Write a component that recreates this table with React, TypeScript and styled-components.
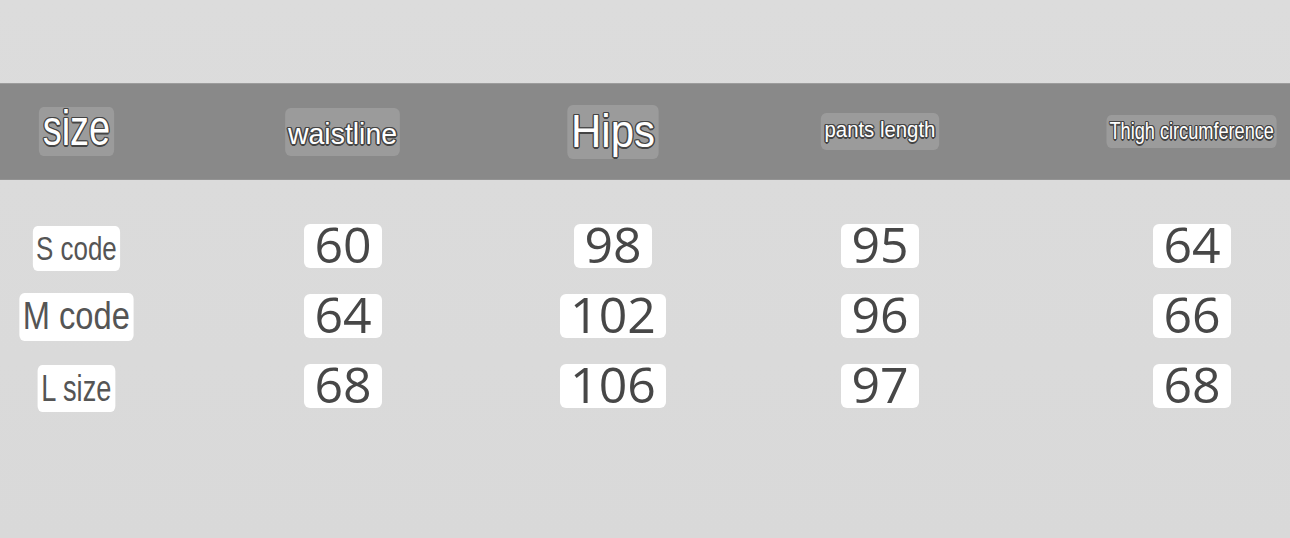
import styled, { createGlobalStyle } from "styled-components";

const GlobalStyle = createGlobalStyle`
  html, body {
    margin: 0;
    padding: 0;
    background: #dbdbdb;
    font-family: "Liberation Sans", Arial, sans-serif;
  }
`;

// column centres sit at 76 / 343 / 613 / 880 / 1192
const COLUMNS = "152px 382px 158px 376px 248px";

type TagProps = {
  $fs: number; // font size
  $sx: number; // horizontal squeeze of the source picture
  $h: number; // box height
  $b: number; // baseline from box top
  $px: number; // side padding
  $dy?: number; // small vertical nudge
};

const headers: (TagProps & { text: string })[] = [
  { text: "size", $fs: 50, $sx: 0.76, $h: 49, $b: 39, $px: 5 },
  { text: "waistline", $fs: 30, $sx: 0.948, $h: 48, $b: 36, $px: 3 },
  { text: "Hips", $fs: 46, $sx: 0.913, $h: 54, $b: 42, $px: 4 },
  { text: "pants length", $fs: 22, $sx: 0.925, $h: 37, $b: 25, $px: 4 },
  { text: "Thigh circumference", $fs: 24, $sx: 0.756, $h: 33, $b: 24, $px: 4 },
];

const rows = [
  {
    label: { text: "S code", $fs: 33, $sx: 0.786, $h: 45, $b: 34, $px: 4, $dy: 2 },
    values: ["60", "98", "95", "64"],
  },
  {
    label: { text: "M code", $fs: 38, $sx: 0.859, $h: 48, $b: 37, $px: 4, $dy: 1 },
    values: ["64", "102", "96", "66"],
  },
  {
    label: { text: "L size", $fs: 36, $sx: 0.755, $h: 47, $b: 36, $px: 5, $dy: 2 },
    values: ["68", "106", "97", "68"],
  },
];

const App = () => {
  return (
    <>
      <GlobalStyle />
      <Page>
        <HeaderBand>
          {headers.map(({ text, ...p }) => (
            <HeadTag key={text} {...p}>
              {text}
            </HeadTag>
          ))}
        </HeaderBand>
        <Table>
          {rows.map((row) => (
            <Row key={row.label.text}>
              <SizeTag {...row.label}>{row.label.text}</SizeTag>
              {row.values.map((v, i) => (
                <NumTag key={i}>{v}</NumTag>
              ))}
            </Row>
          ))}
        </Table>
      </Page>
    </>
  );
};

export default App;

const Page = styled.div`
  width: 1290px;
  height: 538px;
  overflow: hidden;
  padding-top: 83px;
  box-sizing: border-box;
  background: linear-gradient(180deg, #dcdcdc 0%, #d9d9d9 100%);
`;

const HeaderBand = styled.div`
  width: 1316px;
  height: 97px;
  box-sizing: border-box;
  display: grid;
  grid-template-columns: ${COLUMNS};
  align-items: center;
  justify-items: center;
  background: #898989;
  border-top: 1px solid #9c9c9c;
  border-bottom: 1px solid #939393;
`;

const Table = styled.div`
  width: 1316px;
  padding-top: 31px;
  display: flex;
  flex-direction: column;
`;

const Row = styled.div`
  height: 70px;
  display: grid;
  grid-template-columns: ${COLUMNS};
  align-items: center;
  justify-items: center;
`;

const Tag = styled.span<TagProps>`
  display: block;
  box-sizing: border-box;
  height: ${(p) => p.$h}px;
  padding: 0 ${(p) => p.$px}px;
  font-size: ${(p) => p.$fs}px;
  line-height: ${(p) => 2 * (p.$b - 0.3465 * p.$fs)}px;
  white-space: nowrap;
  border-radius: 6px;
  transform: translateY(${(p) => p.$dy ?? 0}px) scaleX(${(p) => p.$sx});
`;

const HeadTag = styled(Tag)`
  background: #9b9b9b;
  color: #ffffff;
  text-shadow:
    1.5px 0 0 #444444,
    -1.5px 0 0 #444444,
    0 1.5px 0 #444444,
    0 -1.5px 0 #444444,
    1px 1px 0 #444444,
    -1px -1px 0 #444444,
    1px -1px 0 #444444,
    -1px 1px 0 #444444;
`;

const SizeTag = styled(Tag)`
  background: #ffffff;
  color: #555555;
`;

const NumTag = styled.span`
  display: block;
  box-sizing: border-box;
  height: 44px;
  padding: 0 10px;
  font-family: "Open Sans", "Noto Sans", sans-serif;
  font-size: 50px;
  line-height: 41px;
  color: #474747;
  background: #ffffff;
  border-radius: 6px;
`;
